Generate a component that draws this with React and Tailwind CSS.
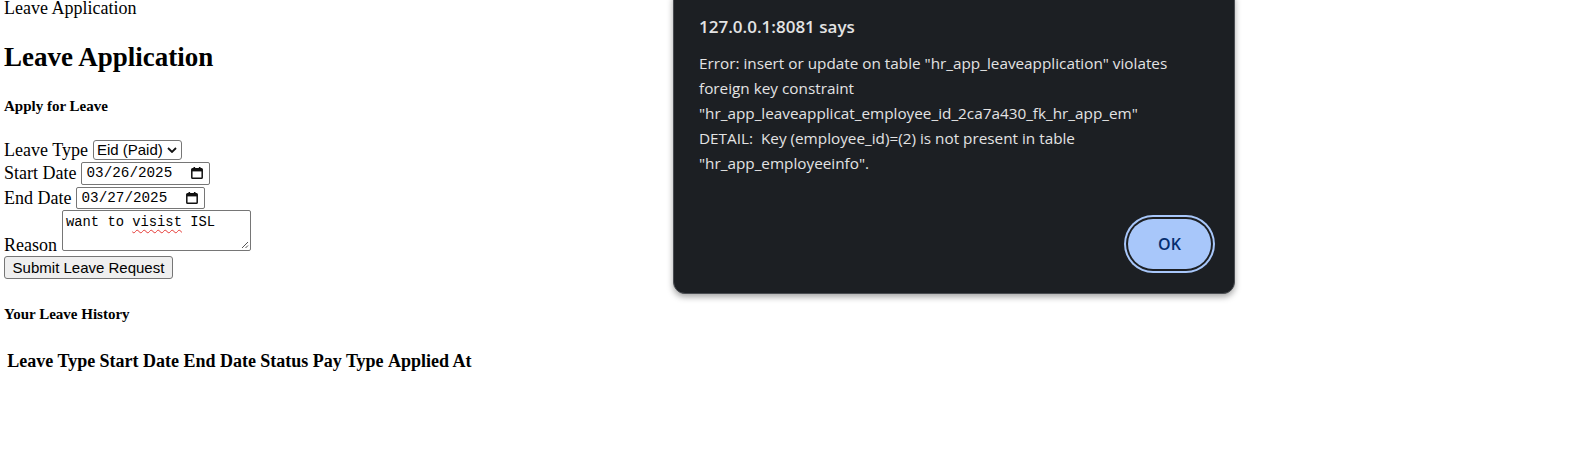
import React from "react";

function CalendarIcon() {
  return (
    <svg width="12" height="12" viewBox="0 0 12 12" className="shrink-0">
      <rect x="2.5" y="0" width="1.6" height="2.5" fill="#111" />
      <rect x="7.9" y="0" width="1.6" height="2.5" fill="#111" />
      <rect x="0.8" y="1.8" width="10.4" height="9.4" rx="0.8" fill="none" stroke="#111" strokeWidth="1.5" />
      <rect x="0.8" y="1.8" width="10.4" height="2.6" fill="#111" />
    </svg>
  );
}

function DateField({ value }) {
  return (
    <div className="flex h-full w-[129px] items-center justify-between rounded-[2px] border border-[#767676] bg-white pl-[4px] pr-[6px]">
      <span className="font-['Liberation_Mono',monospace] text-[14.3px] leading-none text-black">{value}</span>
      <CalendarIcon />
    </div>
  );
}

function Dialog() {
  return (
    <div className="absolute left-[673px] top-[-12px] flex h-[306px] w-[562px] flex-col rounded-[12px] border border-[#4a4d52] bg-[#1c1f23] pl-[25px] pr-[23px] pt-[26px] pb-[24px] font-['Open_Sans',sans-serif] shadow-[0_3px_6px_rgba(0,0,0,0.35)]">
      <div className="text-[17px] font-semibold leading-[24px] text-[#e3e3e3]">127.0.0.1:8081 says</div>
      <div className="mt-[12px] text-[15.3px] leading-[25px] text-[#e3e3e3]">
        <div className="whitespace-pre">Error: insert or update on table "hr_app_leaveapplication" violates</div>
        <div className="whitespace-pre">foreign key constraint</div>
        <div className="whitespace-pre">"hr_app_leaveapplicat_employee_id_2ca7a430_fk_hr_app_em"</div>
        <div className="whitespace-pre">DETAIL:  Key (employee_id)=(2) is not present in table</div>
        <div className="whitespace-pre">"hr_app_employeeinfo".</div>
      </div>
      <div className="mt-auto flex justify-end">
        <button className="h-[50px] w-[83px] rounded-full bg-[#a8c7fa] text-[16px] font-semibold text-[#062e6f] shadow-[0_0_0_2px_#1c1f23,0_0_0_4px_#a8c7fa]">
          OK
        </button>
      </div>
    </div>
  );
}

export default function App() {
  return (
    <div className="relative h-[476px] w-[1596px] overflow-hidden bg-white">
      <div className="pl-[4px] font-['Liberation_Serif',serif] text-[18px] text-black">
        <div className="leading-[17px]">Leave Application</div>
        <h2 className="mt-[25px] text-[27px] font-bold leading-[30px]">Leave Application</h2>
        <h5 className="mt-[26.4px] text-[15px] font-bold leading-[17px]">Apply for Leave</h5>

        <div className="mt-[24.6px] flex h-[20px] items-center gap-[5px]">
          <span className="leading-[20px]">Leave Type</span>
          <div className="flex h-[20px] w-[89px] items-center justify-between rounded-[3px] border border-[#767676] bg-white pl-[3px] pr-[4px]">
            <span className="font-['Liberation_Sans',sans-serif] text-[15px] leading-none">Eid (Paid)</span>
            <svg width="10" height="6" viewBox="0 0 10 6">
              <path d="M1 1l4 4 4-4" fill="none" stroke="#111" strokeWidth="1.8" />
            </svg>
          </div>
        </div>

        <div className="mt-[2px] flex h-[23px] items-center gap-[5px]">
          <span className="leading-[20px]">Start Date</span>
          <DateField value="03/26/2025" />
        </div>

        <div className="mt-[2px] flex h-[22px] items-center gap-[5px]">
          <span className="leading-[20px]">End Date</span>
          <DateField value="03/27/2025" />
        </div>

        <div className="mt-[1px] flex h-[45px] items-end gap-[5px]">
          <span className="leading-[20px]">Reason</span>
          <div className="relative h-[41px] w-[189px] self-start rounded-[2px] border border-[#767676] bg-white pl-[3px] pt-[4px] font-['Liberation_Mono',monospace] text-[13.8px] leading-[16px]">
            want to{" "}
            <span className="underline decoration-[#e53935] decoration-wavy decoration-1 underline-offset-[3px]">visist</span>{" "}
            ISL
            <svg width="8" height="8" viewBox="0 0 8 8" className="absolute bottom-[1px] right-[1px]">
              <path d="M7 1L1 7M7 4.5L4.5 7" stroke="#555" strokeWidth="1" />
            </svg>
          </div>
        </div>

        <button className="mt-[1px] block h-[23px] w-[169px] rounded-[3px] border border-[#767676] bg-[#efefef] font-['Liberation_Sans',sans-serif] text-[15px] leading-none text-black">
          Submit Leave Request
        </button>

        <h5 className="mt-[26.9px] text-[15px] font-bold leading-[17px]">Your Leave History</h5>

        <div className="mt-[28.5px] flex gap-[4.4px] pl-[3.3px] font-bold leading-[20px]">
          <span>Leave Type</span>
          <span>Start Date</span>
          <span>End Date</span>
          <span>Status</span>
          <span>Pay Type</span>
          <span>Applied At</span>
        </div>
      </div>

      <Dialog />
    </div>
  );
}
